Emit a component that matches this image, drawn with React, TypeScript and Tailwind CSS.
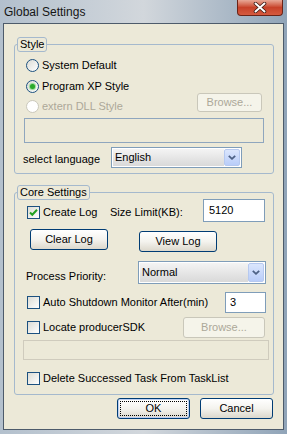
import React from "react";

const FONT = "font-['Liberation_Sans',Arial,sans-serif]";

function Radio({ label, checked, disabled }: { label: string; checked?: boolean; disabled?: boolean }) {
  return (
    <div className="flex items-center h-[17px]">
      <span
        className={
          "w-[13px] h-[13px] rounded-full border flex items-center justify-center " +
          (disabled
            ? "border-[#cac8bb] bg-white"
            : "border-[#1c5180] bg-gradient-to-br from-[#dcdcd5] to-white")
        }
      >
        {checked && <span className="w-[5px] h-[5px] rounded-full bg-[#2aa82a] shadow-[0_0_1px_1px_#8fd98f]" />}
      </span>
      <span className={"ml-[3px] " + (disabled ? "text-[#aca899]" : "text-black")}>{label}</span>
    </div>
  );
}

function Check({ label, checked }: { label: string; checked?: boolean }) {
  return (
    <div className="flex items-center h-[17px]">
      <span className="w-[13px] h-[13px] border border-[#1c5180] bg-gradient-to-br from-[#dcdcd5] to-white flex items-center justify-center">
        {checked && (
          <svg width="11" height="11" viewBox="0 0 11 11">
            <path d="M2 5.5 L4.3 7.8 L9 2.8" stroke="#21a121" strokeWidth="2" fill="none" />
          </svg>
        )}
      </span>
      <span className="ml-[3px] text-black">{label}</span>
    </div>
  );
}

function Button({ label, w, disabled, focused }: { label: string; w: string; disabled?: boolean; focused?: boolean }) {
  if (disabled) {
    return (
      <div className={w + " h-full rounded-[3px] border border-[#c9c7ba] bg-[#f5f4ea] text-[#aca899] flex items-center justify-center"}>
        {label}
      </div>
    );
  }
  return (
    <div
      className={
        w +
        " h-full rounded-[3px] border border-[#003c74] bg-gradient-to-b from-white via-[#f4f3ee] to-[#dcd8cc] text-black flex items-center justify-center p-[2px] " +
        (focused ? "shadow-[inset_0_0_0_1px_#bccff5]" : "")
      }
    >
      <div className={"w-full h-full flex items-center justify-center " + (focused ? "border border-dotted border-black" : "")}>
        {label}
      </div>
    </div>
  );
}

function Combo({ value, w }: { value: string; w: string }) {
  return (
    <div className={w + " h-full border border-[#7f9db9] bg-white p-[1px] flex"}>
      <div className="flex-1 bg-gradient-to-b from-[#f4f4f4] to-[#d9d9d9] pl-[2px] flex items-center text-black">{value}</div>
      <div className="w-[16px] rounded-[2px] bg-gradient-to-b from-[#dbe6fd] to-[#b9cdf9] border border-[#b6c9f0] flex items-center justify-center">
        <svg width="8" height="5" viewBox="0 0 8 5">
          <path d="M0.8 0.8 L4 3.8 L7.2 0.8" stroke="#4d6185" strokeWidth="1.8" fill="none" />
        </svg>
      </div>
    </div>
  );
}

function TextBox({ value, w, pl }: { value: string; w: string; pl: string }) {
  return <div className={w + " h-full border border-[#7f9db9] bg-white flex items-center text-black " + pl}>{value}</div>;
}

function Group({ title, children }: { title: string; children: React.ReactNode }) {
  return (
    <fieldset className="ml-[10px] w-[260px] border border-[#a5b9cd] rounded-[3px]">
      <legend className="ml-[2px] h-[15px] px-[2px] border border-[#a5b9cd] rounded-[3px] leading-[13px] text-black bg-[#ece9d8]">
        {title}
      </legend>
      {children}
    </fieldset>
  );
}

export default function App() {
  return (
    <div
      className={
        FONT +
        " w-[287px] h-[434px] overflow-hidden flex flex-col pb-[4px] text-[11px] bg-gradient-to-r from-[#b3c0cd] via-[#d2d7dc] to-[#90a4b8]"
      }
    >
      {/* title bar */}
      <div className="h-[23px] flex items-start justify-between shrink-0">
        <span className="pl-[4px] pt-[3px] text-[12px] text-[#151515]">Global Settings</span>
        <div className="w-[46px] h-[16px] mr-[4px] rounded-b-[4px] border border-t-0 border-[#6b2317] bg-gradient-to-b from-[#e7a897] via-[#c74129] to-[#d55a3f] flex items-center justify-center">
          <svg width="14" height="11" viewBox="0 0 14 11">
            <path d="M2.5 1.5 L11.5 9.5 M11.5 1.5 L2.5 9.5" stroke="#3b1a14" strokeWidth="3.6" strokeLinecap="round" />
            <path d="M2.5 1.5 L11.5 9.5 M11.5 1.5 L2.5 9.5" stroke="#ffffff" strokeWidth="2" strokeLinecap="round" />
          </svg>
        </div>
      </div>

      {/* client */}
      <div className="mx-[3px] flex-1 border border-[#4d5b6b] bg-[#ece9d8] flex flex-col">
        <div className="mt-[13px]">
          <Group title="Style">
            <div className="flex flex-col pb-[5px]">
              <div className="mt-[5px] pl-[11px]">
                <Radio label="System Default" />
              </div>
              <div className="mt-[4px] pl-[11px]">
                <Radio label="Program XP Style" checked />
              </div>
              <div className="mt-[-2px] h-[22px] pl-[11px] flex items-start">
                <div className="w-[171px] self-end">
                  <Radio label="extern DLL Style" disabled />
                </div>
                <div className="h-[19px]">
                  <Button label="Browse..." w="w-[65px]" disabled />
                </div>
              </div>
              <div className="mt-[3px] ml-[9px] w-[240px] h-[25px] border border-[#8fa6be] bg-[#ece9d8]" />
              <div className="mt-[4px] h-[21px] pl-[8px] flex items-center">
                <span className="w-[88px] pt-[3px] text-black">select language</span>
                <Combo value="English" w="w-[131px]" />
              </div>
            </div>
          </Group>
        </div>

        <div className="mt-[11px]">
          <Group title="Core Settings">
            <div className="flex flex-col pb-[7px]">
              <div className="mt-[-1px] h-[23px] pl-[12px] flex items-start">
                <div className="w-[83px] mt-[5px]">
                  <Check label="Create Log" checked />
                </div>
                <span className="w-[93px] mt-[5px] leading-[17px] text-black">Size Limit(KB):</span>
                <TextBox value="5120" w="w-[62px]" pl="pl-[5px]" />
              </div>
              <div className="mt-[7px] h-[23px] pl-[15px] flex items-start">
                <div className="h-[21px]">
                  <Button label="Clear Log" w="w-[78px]" />
                </div>
                <div className="h-[21px] ml-[31px] mt-[2px]">
                  <Button label="View Log" w="w-[78px]" />
                </div>
              </div>
              <div className="mt-[9px] h-[23px] pl-[11px] flex items-start">
                <span className="w-[112px] mt-[7px] leading-[17px] text-black">Process Priority:</span>
                <Combo value="Normal" w="w-[128px]" />
              </div>
              <div className="mt-[8px] h-[21px] pl-[12px] flex items-center">
                <div className="w-[198px]">
                  <Check label="Auto Shutdown Monitor After(min)" />
                </div>
                <TextBox value="3" w="w-[41px]" pl="pl-[4px]" />
              </div>
              <div className="mt-[4px] h-[21px] pl-[12px] flex items-center">
                <div className="w-[156px]">
                  <Check label="Locate producerSDK" />
                </div>
                <Button label="Browse..." w="w-[82px]" disabled />
              </div>
              <div className="mt-[2px] ml-[8px] w-[246px] h-[20px] border border-[#cfcbbd] bg-[#ece9d8]" />
              <div className="mt-[10px] pl-[12px]">
                <Check label="Delete Successed Task From TaskList" />
              </div>
            </div>
          </Group>
        </div>

        <div className="mt-[3px] h-[21px] flex justify-end gap-[10px] pr-[10px]">
          <Button label="OK" w="w-[73px]" focused />
          <Button label="Cancel" w="w-[73px]" />
        </div>
      </div>
    </div>
  );
}
